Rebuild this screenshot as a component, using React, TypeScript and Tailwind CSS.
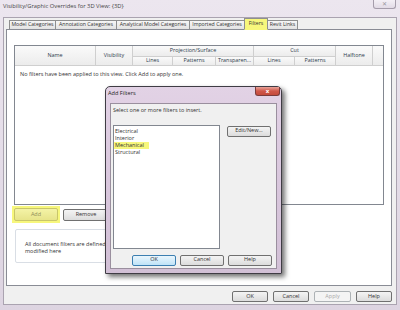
import React from "react";

const btn =
  "flex items-center justify-center rounded-[2px] border border-[#707070] bg-gradient-to-b from-[#f4f4f4] to-[#dcdcdc] text-[#333] leading-none";

function Tab({ label, width, active }: { label: string; width: string; active?: boolean }) {
  return (
    <div
      className={`${width} -ml-px flex items-center justify-center whitespace-nowrap overflow-hidden border border-[#8e8f8f] leading-none text-[5.2px] ${
        active
          ? "h-[12px] bg-[#f7f77c] border-b-[#f7f77c] text-[#333] z-10"
          : "h-[10px] bg-gradient-to-b from-[#f6f6f6] to-[#e2e2e2] text-[#333]"
      }`}
    >
      {label}
    </div>
  );
}

function FilterTable() {
  const head =
    "flex items-center justify-center whitespace-nowrap border-r border-b border-[#cfcfcf] bg-gradient-to-b from-[#fafafa] to-[#ececec] text-[#2c3a4a] leading-none";
  return (
    <div className="ml-[7px] mt-[15px] w-[370px] h-[160px] border border-[#828790] bg-white flex flex-col">
      <div className="grid grid-cols-[81px_37px_40px_43px_38px_41px_41px_37px_10px] grid-rows-[11px_9px] text-[5.4px]">
        <div className={`${head} row-span-2`}>Name</div>
        <div className={`${head} row-span-2`}>Visibility</div>
        <div className={`${head} col-span-3`}>Projection/Surface</div>
        <div className={`${head} col-span-2`}>Cut</div>
        <div className={`${head} row-span-2`}>Halftone</div>
        <div className={`${head} row-span-2 border-r-0`}></div>
        <div className={head}>Lines</div>
        <div className={head}>Patterns</div>
        <div className={head}>Transparen...</div>
        <div className={head}>Lines</div>
        <div className={head}>Patterns</div>
      </div>
      <div className="pl-[5px] pt-[6px] leading-none text-[#333]">
        No filters have been applied to this view. Click Add to apply one.
      </div>
    </div>
  );
}

function AddFiltersDialog() {
  return (
    <div className="absolute left-[105px] top-[86px] w-[177px] h-[188px] rounded-t-[5px] border border-[#3f3c44] bg-gradient-to-b from-[#e2d2e5] via-[#d9c7dd] to-[#d2c0d6] shadow-[3px_3px_5px_rgba(0,0,0,0.55)] flex flex-col">
      <div className="h-[16px] flex items-start justify-between">
        <div className="mt-[4px] ml-[2px] text-[5.6px] leading-none text-[#222]">Add Filters</div>
        <div className="mr-px w-[25px] h-[9px] rounded-b-[3px] border border-t-0 border-[#7a3b3b] bg-gradient-to-b from-[#e8a39a] via-[#d0574a] to-[#c44a3c] flex items-center justify-center text-white text-[6px] font-bold leading-none">
          x
        </div>
      </div>
      <div className="mx-[4px] h-[166px] border border-[#9a8f9e] bg-[#f0f0f0] flex flex-col">
        <div className="pl-[2px] pt-[4px] leading-none text-[#333]">Select one or more filters to insert.</div>
        <div className="flex items-start mt-[11px] ml-[2px]">
          <div className="w-[107px] h-[124px] border border-[#828790] bg-white pt-[2px] flex flex-col text-[#333] leading-[7px]">
            <div className="pl-[1px]">Electrical</div>
            <div className="pl-[1px]">Interior</div>
            <div className="pl-[1px] w-[35px] bg-[#f7f77c]">Mechanical</div>
            <div className="pl-[1px]">Structural</div>
          </div>
          <div className={`${btn} ml-[7px] mt-px w-[44px] h-[11px]`}>Edit/New...</div>
        </div>
        <div className="flex justify-end gap-[4px] mr-[4px] mt-[6px]">
          <div className="w-[44px] h-[11px] flex items-center justify-center rounded-[2px] border border-[#3c7fb1] bg-gradient-to-b from-[#eaf6fd] to-[#bfe3f7] text-[#333] leading-none">
            OK
          </div>
          <div className={`${btn} w-[44px] h-[11px]`}>Cancel</div>
          <div className={`${btn} w-[44px] h-[11px]`}>Help</div>
        </div>
      </div>
    </div>
  );
}

export default function App() {
  return (
    <div className="relative w-[400px] h-[310px] overflow-hidden bg-gradient-to-b from-[#ece6ef] to-[#ddd4e1] font-['Open_Sans',sans-serif] text-[5.5px]">
      {/* Title bar */}
      <div className="h-[17px] flex items-start justify-between">
        <div className="mt-[4px] ml-[3px] text-[5.8px] leading-none text-[#444]">
          {"Visibility/Graphic Overrides for 3D View: {3D}"}
        </div>
        <div className="mr-[4px] w-[23px] h-[9px] rounded-b-[3px] border border-t-0 border-[#a59dab] bg-gradient-to-b from-[#f4f0f6] to-[#e2dbe6] flex items-center justify-center text-[#9a96a0] text-[6px] leading-none">
          ✕
        </div>
      </div>

      {/* Client area */}
      <div className="mx-[3px] h-[288px] border border-[#aaa3b0] bg-[#f0f0f0] flex flex-col">
        <div className="flex items-end h-[12px] ml-[6px] -mb-px">
          <Tab label="Model Categories" width="w-[47px]" />
          <Tab label="Annotation Categories" width="w-[62px]" />
          <Tab label="Analytical Model Categories" width="w-[74px]" />
          <Tab label="Imported Categories" width="w-[56px]" />
          <Tab label="Filters" width="w-[24px]" active />
          <Tab label="Revit Links" width="w-[31px]" />
        </div>
        <div className="ml-[2px] w-[386px] h-[257px] border border-[#898c95] bg-white flex flex-col">
          <FilterTable />
          <div className="flex items-center mt-px ml-[5px]">
            <div className="w-[48px] h-[17px] bg-[#f7f77c] flex items-center justify-center">
              <div className="w-[44px] h-[13px] flex items-center justify-center rounded-[2px] border border-[#c9c66a] bg-gradient-to-b from-[#f4f3a6] to-[#e7e48a] text-[#8f8d5a] leading-none">
                Add
              </div>
            </div>
            <div className={`${btn} ml-[3px] w-[46px] h-[12px]`}>Remove</div>
          </div>
          <div className="ml-[8px] mt-[6px] w-[240px] h-[34px] rounded-[2px] border border-[#d9dee5] bg-white pl-[9px] pt-[11px] text-[#333] leading-[7px]">
            All document filters are defined and
            <br />
            modified here
          </div>
        </div>
        <div className="flex justify-end gap-[5px] mr-[4px] mt-[5px]">
          <div className={`${btn} w-[36px] h-[11px]`}>OK</div>
          <div className={`${btn} w-[36px] h-[11px]`}>Cancel</div>
          <div className="w-[37px] h-[11px] flex items-center justify-center rounded-[2px] border border-[#adb2b5] bg-[#f4f4f4] text-[#a8a8a8] leading-none">
            Apply
          </div>
          <div className={`${btn} w-[36px] h-[11px]`}>Help</div>
        </div>
      </div>

      <AddFiltersDialog />
    </div>
  );
}
